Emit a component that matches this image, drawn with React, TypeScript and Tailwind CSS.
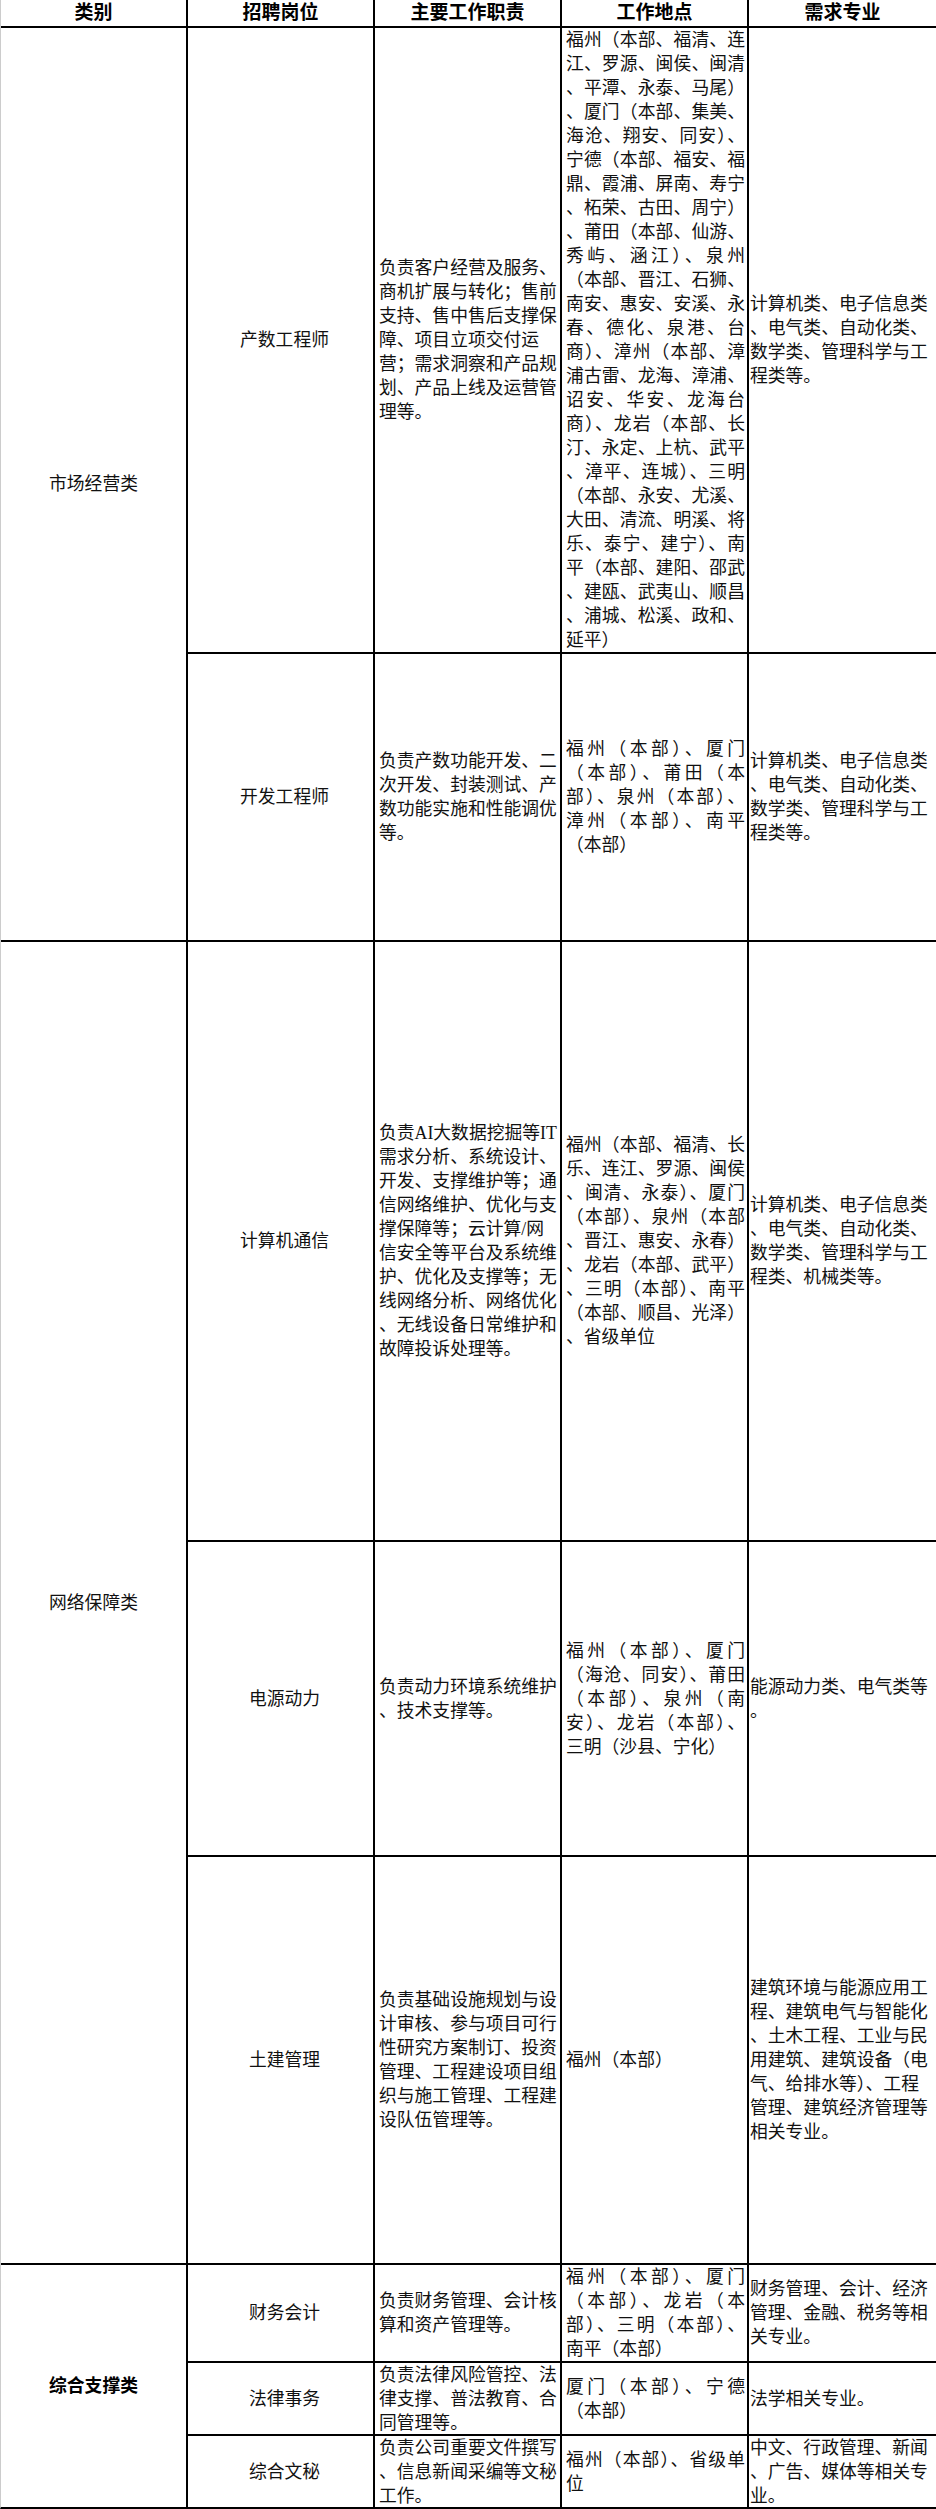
import React from "react";

type Row = {
  pos: string;
  duties: string[];
  loc: string[];
  majors: string[];
};

const rows: Row[] = [
  {
    pos: "产数工程师",
    duties: [
      "负责客户经营及服务、",
      "商机扩展与转化；售前",
      "支持、售中售后支撑保",
      "障、项目立项交付运",
      "营；需求洞察和产品规",
      "划、产品上线及运营管",
      "理等。",
    ],
    loc: [
      "福州（本部、福清、连",
      "江、罗源、闽侯、闽清",
      "、平潭、永泰、马尾）",
      "、厦门（本部、集美、",
      "海沧、翔安、同安）、",
      "宁德（本部、福安、福",
      "鼎、霞浦、屏南、寿宁",
      "、柘荣、古田、周宁）",
      "、莆田（本部、仙游、",
      "秀屿、涵江）、泉州",
      "（本部、晋江、石狮、",
      "南安、惠安、安溪、永",
      "春、德化、泉港、台",
      "商）、漳州（本部、漳",
      "浦古雷、龙海、漳浦、",
      "诏安、华安、龙海台",
      "商）、龙岩（本部、长",
      "汀、永定、上杭、武平",
      "、漳平、连城）、三明",
      "（本部、永安、尤溪、",
      "大田、清流、明溪、将",
      "乐、泰宁、建宁）、南",
      "平（本部、建阳、邵武",
      "、建瓯、武夷山、顺昌",
      "、浦城、松溪、政和、",
      "延平）",
    ],
    majors: ["计算机类、电子信息类", "、电气类、自动化类、", "数学类、管理科学与工", "程类等。"],
  },
  {
    pos: "开发工程师",
    duties: ["负责产数功能开发、二", "次开发、封装测试、产", "数功能实施和性能调优", "等。"],
    loc: ["福州（本部）、厦门", "（本部）、莆田（本", "部）、泉州（本部）、", "漳州（本部）、南平", "（本部）"],
    majors: ["计算机类、电子信息类", "、电气类、自动化类、", "数学类、管理科学与工", "程类等。"],
  },
  {
    pos: "计算机通信",
    duties: [
      "负责AI大数据挖掘等IT",
      "需求分析、系统设计、",
      "开发、支撑维护等；通",
      "信网络维护、优化与支",
      "撑保障等；云计算/网",
      "信安全等平台及系统维",
      "护、优化及支撑等；无",
      "线网络分析、网络优化",
      "、无线设备日常维护和",
      "故障投诉处理等。",
    ],
    loc: [
      "福州（本部、福清、长",
      "乐、连江、罗源、闽侯",
      "、闽清、永泰）、厦门",
      "（本部）、泉州（本部",
      "、晋江、惠安、永春）",
      "、龙岩（本部、武平）",
      "、三明（本部）、南平",
      "（本部、顺昌、光泽）",
      "、省级单位",
    ],
    majors: ["计算机类、电子信息类", "、电气类、自动化类、", "数学类、管理科学与工", "程类、机械类等。"],
  },
  {
    pos: "电源动力",
    duties: ["负责动力环境系统维护", "、技术支撑等。"],
    loc: ["福州（本部）、厦门", "（海沧、同安）、莆田", "（本部）、泉州（南", "安）、龙岩（本部）、", "三明（沙县、宁化）"],
    majors: ["能源动力类、电气类等", "。"],
  },
  {
    pos: "土建管理",
    duties: [
      "负责基础设施规划与设",
      "计审核、参与项目可行",
      "性研究方案制订、投资",
      "管理、工程建设项目组",
      "织与施工管理、工程建",
      "设队伍管理等。",
    ],
    loc: ["福州（本部）"],
    majors: [
      "建筑环境与能源应用工",
      "程、建筑电气与智能化",
      "、土木工程、工业与民",
      "用建筑、建筑设备（电",
      "气、给排水等）、工程",
      "管理、建筑经济管理等",
      "相关专业。",
    ],
  },
  {
    pos: "财务会计",
    duties: ["负责财务管理、会计核", "算和资产管理等。"],
    loc: ["福州（本部）、厦门", "（本部）、龙岩（本", "部）、三明（本部）、", "南平（本部）"],
    majors: ["财务管理、会计、经济", "管理、金融、税务等相", "关专业。"],
  },
  {
    pos: "法律事务",
    duties: ["负责法律风险管控、法", "律支撑、普法教育、合", "同管理等。"],
    loc: ["厦门（本部）、宁德", "（本部）"],
    majors: ["法学相关专业。"],
  },
  {
    pos: "综合文秘",
    duties: ["负责公司重要文件撰写", "、信息新闻采编等文秘", "工作。"],
    loc: ["福州（本部）、省级单", "位"],
    majors: ["中文、行政管理、新闻", "、广告、媒体等相关专", "业。"],
  },
];

const rowClass = [
  "row-start-2",
  "row-start-3",
  "row-start-4",
  "row-start-5",
  "row-start-6",
  "row-start-7",
  "row-start-8",
  "row-start-9",
];

function Lines({ lines, justify }: { lines: string[]; justify?: boolean }) {
  return (
    <>
      {lines.map((l, i) => (
        <div
          key={i}
          className={
            justify && i < lines.length - 1
              ? "whitespace-nowrap text-justify [text-align-last:justify]"
              : "whitespace-nowrap text-left"
          }
        >
          {l}
        </div>
      ))}
    </>
  );
}

export default function App() {
  const font = {
    fontFamily: '"Liberation Serif", "Noto Sans CJK SC", serif',
  };
  return (
    <div className="w-[936px] bg-white" style={font}>
      <div className="grid grid-cols-[185px_185px_185px_185px_1fr] grid-rows-[26px_624px_286px_598px_313px_406px_96px_71px_71px] gap-[2px] bg-black border-l border-l-[#cccccc] border-b-2 border-b-black text-[17.8px] leading-[24px] text-[#111]">
        {["类别", "招聘岗位", "主要工作职责", "工作地点", "需求专业"].map((h) => (
          <div
            key={h}
            className="bg-white flex items-center justify-center font-bold text-[19px] text-black"
          >
            {h}
          </div>
        ))}

        <div className="bg-white col-start-1 row-start-2 row-span-2 flex items-center justify-center">
          市场经营类
        </div>
        <div className="bg-white col-start-1 row-start-4 row-span-3 flex items-center justify-center">
          网络保障类
        </div>
        <div className="bg-white col-start-1 row-start-7 row-span-3 flex items-center justify-center font-bold text-black">
          综合支撑类
        </div>

        {rows.map((r, i) => (
          <React.Fragment key={r.pos}>
            <div className={`bg-white col-start-2 ${rowClass[i]} flex items-center justify-center pl-[8px]`}>
              {r.pos}
            </div>
            <div className={`bg-white col-start-3 ${rowClass[i]} flex flex-col justify-center pl-[4px] pr-[1px]`}>
              <Lines lines={r.duties} />
            </div>
            <div className={`bg-white col-start-4 ${rowClass[i]} flex flex-col justify-center pl-[4px] pr-[2px]`}>
              <Lines lines={r.loc} justify />
            </div>
            <div className={`bg-white col-start-5 ${rowClass[i]} flex flex-col justify-center pl-[1px] pr-[1px]`}>
              <Lines lines={r.majors} />
            </div>
          </React.Fragment>
        ))}
      </div>
    </div>
  );
}
